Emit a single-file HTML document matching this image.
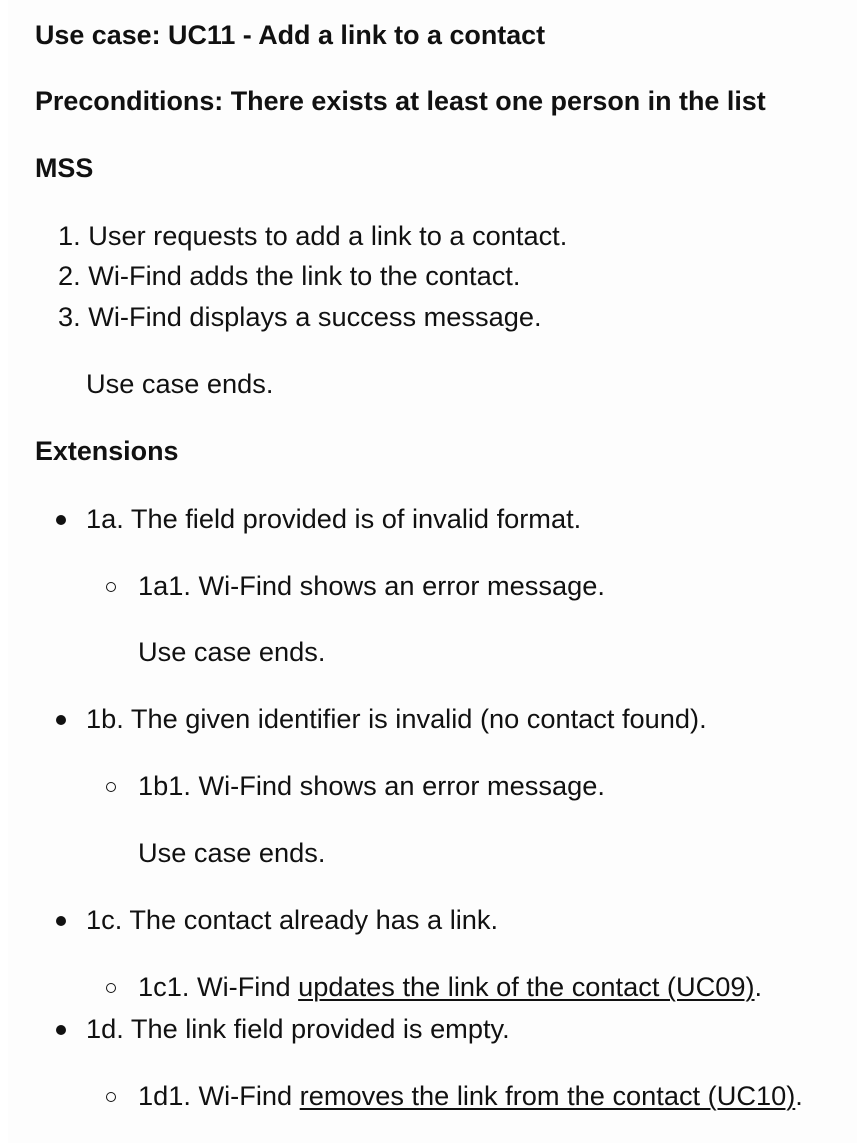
<!DOCTYPE html>
<html><head><meta charset="utf-8"><style>
html,body{margin:0;padding:0;}
body{width:857px;height:1143px;background:#fdfdfd;position:relative;overflow:hidden;font-family:"Liberation Sans",sans-serif;color:#111;font-size:27.2px;}
.strip{position:absolute;left:0;top:0;width:8px;height:1143px;background:#fff;}
.l{position:absolute;line-height:30px;white-space:nowrap;}
b{font-weight:bold;font-size:26.9px;}
.dot{position:absolute;width:10px;height:10px;border-radius:50%;background:#111;}
.circ{position:absolute;width:8px;height:8px;border-radius:50%;border:1.5px solid #111;}
u{text-decoration-thickness:2px;text-underline-offset:3px;}
</style></head><body>
<div class="strip"></div>
<div class="l" style="left:35px;top:20px"><b>Use case: UC11 - Add a link to a contact</b></div>
<div class="l" style="left:35px;top:86px"><b>Preconditions: There exists at least one person in the list</b></div>
<div class="l" style="left:35px;top:153px"><b>MSS</b></div>
<div class="l" style="left:58px;top:221px">1. User requests to add a link to a contact.</div>
<div class="l" style="left:58px;top:261px">2. Wi-Find adds the link to the contact.</div>
<div class="l" style="left:58px;top:302px">3. Wi-Find displays a success message.</div>
<div class="l" style="left:86px;top:369px">Use case ends.</div>
<div class="l" style="left:35px;top:436px"><b>Extensions</b></div>
<div class="dot" style="left:56px;top:515px"></div>
<div class="l" style="left:86px;top:504px">1a. The field provided is of invalid format.</div>
<div class="circ" style="left:106px;top:582px"></div>
<div class="l" style="left:138px;top:571px">1a1. Wi-Find shows an error message.</div>
<div class="l" style="left:138px;top:637px">Use case ends.</div>
<div class="dot" style="left:56px;top:715px"></div>
<div class="l" style="left:86px;top:704px">1b. The given identifier is invalid (no contact found).</div>
<div class="circ" style="left:106px;top:782px"></div>
<div class="l" style="left:138px;top:771px">1b1. Wi-Find shows an error message.</div>
<div class="l" style="left:138px;top:838px">Use case ends.</div>
<div class="dot" style="left:56px;top:916px"></div>
<div class="l" style="left:86px;top:905px">1c. The contact already has a link.</div>
<div class="circ" style="left:106px;top:983px"></div>
<div class="l" style="left:138px;top:972px">1c1. Wi-Find <u>updates the link of the contact (UC09)</u>.</div>
<div class="dot" style="left:56px;top:1025px"></div>
<div class="l" style="left:86px;top:1014px">1d. The link field provided is empty.</div>
<div class="circ" style="left:106px;top:1092px"></div>
<div class="l" style="left:138px;top:1081px">1d1. Wi-Find <u>removes the link from the contact (UC10)</u>.</div>
</body></html>
